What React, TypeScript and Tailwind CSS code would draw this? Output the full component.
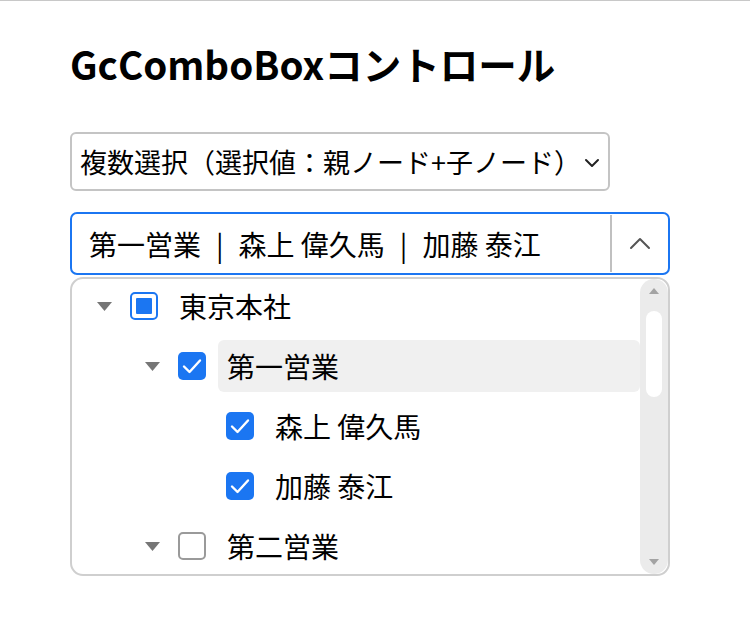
import React from "react"

type CheckState = "checked" | "unchecked" | "indeterminate"

interface TreeRow {
  label: string
  level: number
  expandable: boolean
  state: CheckState
  active?: boolean
}

const rows: TreeRow[] = [
  { label: "東京本社", level: 0, expandable: true, state: "indeterminate" },
  { label: "第一営業", level: 1, expandable: true, state: "checked", active: true },
  { label: "森上 偉久馬", level: 2, expandable: false, state: "checked" },
  { label: "加藤 泰江", level: 2, expandable: false, state: "checked" },
  { label: "第二営業", level: 1, expandable: true, state: "unchecked" },
]

const indents = ["pl-[25px]", "pl-[73px]", "pl-[121px]"]

function CheckBox({ state }: { state: CheckState }) {
  if (state === "checked") {
    return (
      <div className="flex h-[28px] w-[28px] shrink-0 items-center justify-center rounded-[5px] bg-[#1b76f2]">
        <svg width="20" height="16" viewBox="0 0 20 16" fill="none">
          <path d="M2 8.5 L7.5 14 L18 2.5" stroke="white" strokeWidth="2.4" strokeLinecap="round" strokeLinejoin="round" />
        </svg>
      </div>
    )
  }
  if (state === "indeterminate") {
    return (
      <div className="flex h-[28px] w-[28px] shrink-0 items-center justify-center rounded-[5px] border-2 border-[#1b76f2] bg-white">
        <div className="h-[16px] w-[16px] rounded-[1px] bg-[#1b76f2]" />
      </div>
    )
  }
  return <div className="h-[28px] w-[28px] shrink-0 rounded-[5px] border-2 border-[#9a9a9a] bg-white" />
}

function Caret({ hidden }: { hidden?: boolean }) {
  return (
    <svg width="15" height="9" viewBox="0 0 15 9" className={`shrink-0 ${hidden ? "invisible" : ""}`}>
      <polygon points="0,0 15,0 7.5,9" fill="#767676" />
    </svg>
  )
}

export default function App() {
  return (
    <main
      className="min-h-screen border-t border-[#c8c8c8] bg-white text-black"
      style={{ fontFamily: '"Noto Sans CJK JP", "Noto Sans", sans-serif' }}
    >
      <div className="pl-[70px] pt-[35px]">
        <h1 className="mb-[42px] text-[38.5px] font-bold leading-[54px]">GcComboBoxコントロール</h1>

        {/* Mode select */}
        <div className="mb-[21px] flex h-[59px] w-[540px] items-center rounded-[6px] border-2 border-[#c4c4c4] pl-[8px] pr-[8px]">
          <span className="flex-1 whitespace-nowrap text-[27px] leading-none">複数選択（選択値：親ノード+子ノード）</span>
          <svg width="16" height="10" viewBox="0 0 16 10" fill="none" className="mt-[2px] shrink-0">
            <path d="M2 2 L8 8 L14 2" stroke="#222" strokeWidth="2" strokeLinecap="round" strokeLinejoin="round" />
          </svg>
        </div>

        {/* Combo box */}
        <div className="flex h-[63px] w-[600px] items-stretch rounded-[7px] border-2 border-[#1b76f2]">
          <div className="flex flex-1 items-center whitespace-nowrap pl-[17px] text-[28px] leading-none">
            <span>第一営業</span>
            <span className="mx-[15px]">|</span>
            <span>森上 偉久馬</span>
            <span className="mx-[15px]">|</span>
            <span>加藤 泰江</span>
          </div>
          <div className="my-[1px] w-[2px] bg-[#c0c0c0]" />
          <div className="flex w-[56px] items-center justify-center">
            <svg width="22" height="13" viewBox="0 0 22 13" fill="none">
              <path d="M2 11 L11 2 L20 11" stroke="#555" strokeWidth="2" strokeLinecap="round" strokeLinejoin="round" />
            </svg>
          </div>
        </div>

        {/* Dropdown tree */}
        <div className="mt-[2px] flex h-[299px] w-[600px] overflow-hidden rounded-[13px] border-2 border-[#cfcfcf]">
          <div className="-mt-[3px] flex-1">
            {rows.map((row) => (
              <div key={row.label} className={`flex h-[60px] items-center ${indents[row.level]}`}>
                <Caret hidden={!row.expandable} />
                <div className="ml-[18px]">
                  <CheckBox state={row.state} />
                </div>
                <div
                  className={`ml-[12px] flex h-[52px] flex-1 items-center rounded-[6px] pl-[9px] text-[28px] leading-none ${
                    row.active ? "bg-[#f0f0f0]" : ""
                  }`}
                >
                  {row.label}
                </div>
              </div>
            ))}
          </div>

          {/* Scrollbar */}
          <div className="flex w-[28px] flex-col items-center rounded-full bg-[#ebebeb]">
            <svg width="10" height="6" viewBox="0 0 10 6" className="mt-[9px]">
              <polygon points="5,0 10,6 0,6" fill="#a3a3a3" />
            </svg>
            <div className="mt-[17px] h-[86px] w-[16px] rounded-full bg-white" />
            <div className="flex-1" />
            <svg width="10" height="6" viewBox="0 0 10 6" className="mb-[9px]">
              <polygon points="0,0 10,0 5,6" fill="#a3a3a3" />
            </svg>
          </div>
        </div>
      </div>
    </main>
  )
}
